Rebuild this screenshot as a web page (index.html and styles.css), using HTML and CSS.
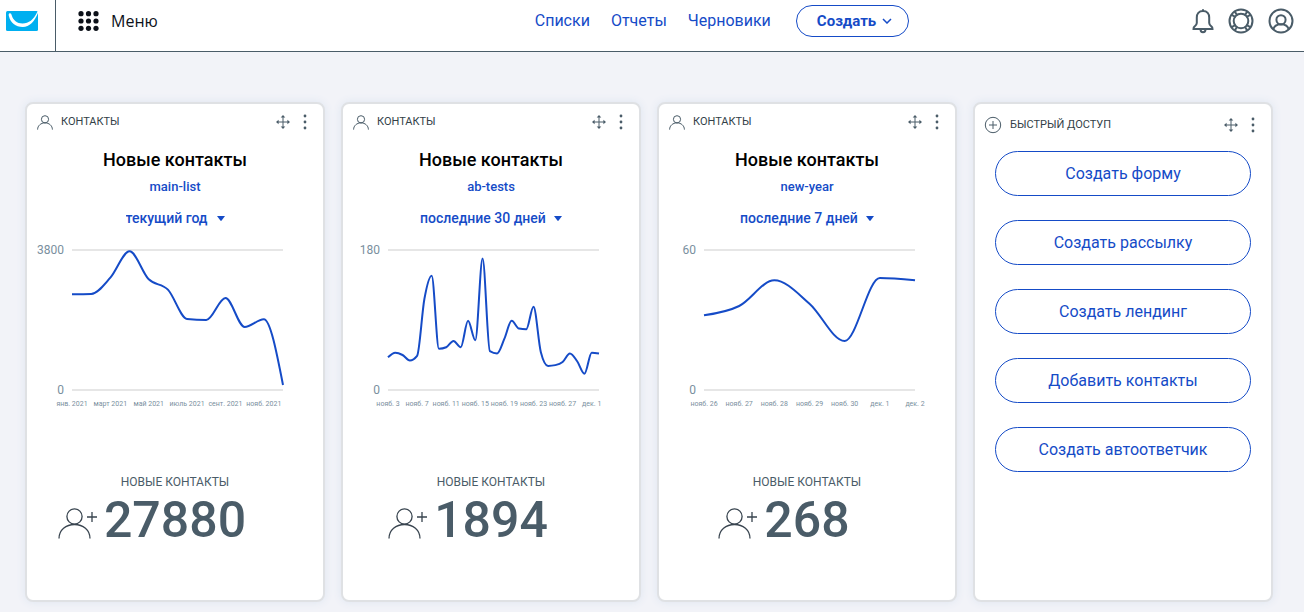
FILE: index.html
```html
<!DOCTYPE html>
<html lang="ru">
<head>
<meta charset="utf-8">
<meta name="viewport" content="width=device-width, initial-scale=1">
<title>Панель управления</title>
<link rel="stylesheet" href="styles.css">
</head>
<body>
<svg class="sprite" aria-hidden="true">
  <symbol id="person" viewBox="0 0 16 15"><circle cx="8" cy="4.3" r="3.6"/><path d="M.6 14.6C.6 10.6 3.9 7.9 8 7.9s7.4 2.7 7.4 6.7"/></symbol>
  <symbol id="move" viewBox="0 0 14 14"><path d="M7 1v12M1 7h12"/><path class="solid" d="M7 0l2.3 2.6H4.7zM7 14l2.3-2.6H4.7zM0 7l2.6-2.3v4.6zM14 7l-2.6-2.3v4.6z"/></symbol>
  <symbol id="dots" viewBox="0 0 4 16"><g class="solid"><circle cx="2" cy="2" r="1.4"/><circle cx="2" cy="8" r="1.4"/><circle cx="2" cy="14" r="1.4"/></g></symbol>
  <symbol id="caret" viewBox="0 0 8 5"><path class="solid" d="M0 0h8L4.6 4.6q-.6.6-1.2 0z"/></symbol>
  <symbol id="person-add" viewBox="0 0 40 32"><circle cx="16.5" cy="9.5" r="7.6"/><path d="M1 31.500c0-8.500 7-14 15.500-14S32 23 32 31.500M29 10h10M34 5v10"/></symbol>
</svg>

<header class="topbar">
  <a class="logo" href="#" aria-label="Главная">
    <svg width="32" height="20" viewBox="0 0 32 20"><rect width="32" height="20" rx="1.500" fill="#00aff0"/><path d="M3.200 2.500c1.500-.6 2 .2 2.600 2C7.200 9.200 11 12.500 16.500 12.500 23 12.500 27.500 8.500 31 1.500l1-1.500v2C28.500 10.500 23.500 16 16.800 16 9.500 16 4.500 11.500 3 5.500c-.4-1.500-.5-2.500.2-3z" fill="#fff"/></svg>
  </a>
  <button class="menu" type="button">
    <svg width="21" height="20" viewBox="0 0 21 20" fill="currentColor"><circle cx="3" cy="2.700" r="2.600"/><circle cx="10.500" cy="2.700" r="2.600"/><circle cx="18" cy="2.700" r="2.600"/><circle cx="3" cy="10" r="2.600"/><circle cx="10.500" cy="10" r="2.600"/><circle cx="18" cy="10" r="2.600"/><circle cx="3" cy="17.300" r="2.600"/><circle cx="10.500" cy="17.300" r="2.600"/><circle cx="18" cy="17.300" r="2.600"/></svg>
    Меню
  </button>
  <nav class="nav">
    <a href="#">Списки</a>
    <a href="#">Отчеты</a>
    <a href="#">Черновики</a>
    <button class="create" type="button">Создать
      <svg width="10" height="6" viewBox="0 0 10 6"><path d="M1 1l4 4 4-4" fill="none" stroke="currentColor" stroke-width="1.500"/></svg>
    </button>
  </nav>
  <div class="tools">
    <button type="button" aria-label="Уведомления"><svg width="22" height="26" viewBox="0 0 22 26"><path d="M11 1.200v2M11 3C6.800 3 4.800 6 4.800 9.500v5.500c0 1.800-.8 2.400-2.300 3.600-.8.700-1 1.200-1 2.300h19c0-1.100-.2-1.600-1-2.300-1.500-1.200-2.300-1.800-2.300-3.600V9.500C17.200 6 15.200 3 11 3zM8.500 21c0 2.200 1 3.300 2.500 3.300s2.500-1.100 2.500-3.300"/></svg></button>
    <button type="button" aria-label="Помощь"><svg width="26" height="26" viewBox="0 0 26 26"><circle cx="13" cy="13" r="11.500"/><circle cx="13" cy="13" r="7.300"/><path d="M3.600 6.800l3.800 2.100M6.800 3.600l2.300 3.600M19.200 3.600l-2.300 3.600M22.400 6.800l-3.800 2.100M3.600 19.200l3.800-2.100M6.800 22.400l2.300-3.600M19.200 22.400l-2.300-3.600M22.400 19.200l-3.800-2.100"/></svg></button>
    <button type="button" aria-label="Профиль"><svg width="26" height="26" viewBox="0 0 26 26"><circle cx="13" cy="13" r="11.500"/><circle cx="13" cy="11.800" r="4.600"/><path d="M5.300 21.500c.7-3.400 3.700-5.300 7.700-5.300s7 1.900 7.700 5.300"/></svg></button>
  </div>
</header>

<main class="board">
  <section class="card">
    <div class="card-head">
      <svg class="icon" width="16" height="15"><use href="#person"/></svg>
      <span class="card-label">КОНТАКТЫ</span>
      <button type="button" aria-label="Переместить"><svg class="icon" width="14" height="14"><use href="#move"/></svg></button>
      <button type="button" aria-label="Действия"><svg class="icon" width="4" height="16"><use href="#dots"/></svg></button>
    </div>
    <h2 class="title">Новые контакты</h2>
    <a class="list-link" href="#">main-list</a>
    <label class="period"><select aria-label="Период"><option>текущий год</option></select><svg width="8" height="5"><use href="#caret"/></svg></label>
    <svg class="chart" viewBox="0 0 296 180" data-max="3800" data-values="2597,2606,3049,3764,3004,2723,1927,1900,2497,1710,1918,136" data-step="2" data-labels="янв. 2021|март 2021|май 2021|июль 2021|сент. 2021|нояб. 2021"></svg>
    <div class="stat-label">НОВЫЕ КОНТАКТЫ</div>
    <div class="stat"><svg class="icon" width="40" height="32"><use href="#person-add"/></svg>27880</div>
  </section>

  <section class="card">
    <div class="card-head">
      <svg class="icon" width="16" height="15"><use href="#person"/></svg>
      <span class="card-label">КОНТАКТЫ</span>
      <button type="button" aria-label="Переместить"><svg class="icon" width="14" height="14"><use href="#move"/></svg></button>
      <button type="button" aria-label="Действия"><svg class="icon" width="4" height="16"><use href="#dots"/></svg></button>
    </div>
    <h2 class="title">Новые контакты</h2>
    <a class="list-link" href="#">ab-tests</a>
    <label class="period"><select aria-label="Период"><option>последние 30 дней</option></select><svg width="8" height="5"><use href="#caret"/></svg></label>
    <svg class="chart" viewBox="0 0 296 180" data-max="180" data-values="42,48,45,38,44,117,147,53,55,63,55,89,64,169,50,47,66,89,79,78,107,49,31,32,36,47,37,21,48,47" data-step="4" data-labels="нояб. 3|нояб. 7|нояб. 11|нояб. 15|нояб. 19|нояб. 23|нояб. 27|дек. 1"></svg>
    <div class="stat-label">НОВЫЕ КОНТАКТЫ</div>
    <div class="stat"><svg class="icon" width="40" height="32"><use href="#person-add"/></svg>1894</div>
  </section>

  <section class="card">
    <div class="card-head">
      <svg class="icon" width="16" height="15"><use href="#person"/></svg>
      <span class="card-label">КОНТАКТЫ</span>
      <button type="button" aria-label="Переместить"><svg class="icon" width="14" height="14"><use href="#move"/></svg></button>
      <button type="button" aria-label="Действия"><svg class="icon" width="4" height="16"><use href="#dots"/></svg></button>
    </div>
    <h2 class="title">Новые контакты</h2>
    <a class="list-link" href="#">new-year</a>
    <label class="period"><select aria-label="Период"><option>последние 7 дней</option></select><svg width="8" height="5"><use href="#caret"/></svg></label>
    <svg class="chart" viewBox="0 0 296 180" data-max="60" data-values="32,36,47,37,21,48,47" data-step="1" data-labels="нояб. 26|нояб. 27|нояб. 28|нояб. 29|нояб. 30|дек. 1|дек. 2"></svg>
    <div class="stat-label">НОВЫЕ КОНТАКТЫ</div>
    <div class="stat"><svg class="icon" width="40" height="32"><use href="#person-add"/></svg>268</div>
  </section>

  <section class="card">
    <div class="card-head card-head-tall">
      <svg class="icon" width="18" height="18" viewBox="0 0 18 18"><circle cx="9" cy="9" r="7.700"/><path d="M9 5v8M5 9h8"/></svg>
      <span class="card-label">БЫСТРЫЙ ДОСТУП</span>
      <button type="button" aria-label="Переместить"><svg class="icon" width="14" height="14"><use href="#move"/></svg></button>
      <button type="button" aria-label="Действия"><svg class="icon" width="4" height="16"><use href="#dots"/></svg></button>
    </div>
    <div class="actions">
      <button type="button">Создать форму</button>
      <button type="button">Создать рассылку</button>
      <button type="button">Создать лендинг</button>
      <button type="button">Добавить контакты</button>
      <button type="button">Создать автоответчик</button>
    </div>
  </section>
</main>
<script src="charts.js"></script>
</body>
</html>
```
FILE: styles.css
```css
* { box-sizing: border-box; }

body {
  margin: 0;
  background: #f2f3f8;
  color: #000;
  font: 16px/20px Roboto, "Liberation Sans", sans-serif;
}

button, select {
  margin: 0;
  padding: 0;
  border: 0;
  background: none;
  color: inherit;
  font: inherit;
  cursor: pointer;
}

a { color: #154bc7; text-decoration: none; }
svg { display: block; flex: none; }

.sprite { position: absolute; width: 0; height: 0; }
.solid { fill: currentColor; stroke: none; }

.icon {
  color: #4a5c68;
  fill: none;
  stroke: currentColor;
  stroke-width: 1;
}

.topbar {
  display: grid;
  grid-template-columns: auto auto 4fr auto 3fr auto;
  align-items: center;
  height: 52px;
  padding-bottom: 9px;
  border-bottom: 1px solid #4a5c68;
  background: #fff;
}

.logo {
  align-self: start;
  height: 51px;
  margin-bottom: -9px;
  padding: 11px 17px 0 6px;
  border-right: 1px solid #4a5c68;
}

.menu {
  display: flex;
  align-items: center;
  gap: 12px;
  margin-left: 22px;
  font-family: "Open Sans", "Noto Sans", sans-serif;
  font-weight: 500;
  color: #0c1119;
}

.nav {
  grid-column: 4;
  display: flex;
  align-items: center;
  gap: 21px;
}

.create {
  display: flex;
  align-items: center;
  justify-content: center;
  gap: 6px;
  height: 32px;
  margin-left: 4px;
  padding: 0 16px 0 20px;
  border: 1px solid #154bc7;
  border-radius: 16px;
  color: #154bc7;
  font-size: 15px;
  font-weight: 700;
}

.tools {
  grid-column: 6;
  display: flex;
  gap: 14px;
  padding-right: 10px;
}

.tools svg {
  fill: none;
  stroke: #4a5c68;
  stroke-width: 2;
}

.board {
  display: grid;
  grid-template-columns: repeat(4, 1fr);
  gap: 16px;
  padding: 50px 31px 11px 25px;
}

.card {
  display: flex;
  flex-direction: column;
  align-items: center;
  padding-bottom: 54px;
  border: 2px solid #dfe1e4;
  border-radius: 8px;
  background: #fff;
  box-shadow: 0 0 8px #dde5f0;
}

.card-head {
  display: flex;
  align-items: center;
  align-self: stretch;
  gap: 8px;
  height: 36px;
  padding: 0 16px 0 10px;
}

.card-head-tall { height: 42px; padding-left: 9px; }
.card-label { flex: 1; font-size: 11px; color: #333f48; }
.card-head button:last-child { margin-left: 5px; }

.title {
  margin: 8px 0 5px;
  font-size: 18px;
  line-height: 24px;
  font-weight: 500;
}

.list-link { font-size: 13px; font-weight: 500; }

.period {
  display: flex;
  align-items: center;
  gap: 8px;
  height: 20px;
  margin: 11px 0 7px;
  color: #154bc7;
  font-size: 14px;
  font-weight: 500;
}

.period select { appearance: none; }

.chart { width: 100%; overflow: visible; }
.chart .grid { stroke: #e6e6e6; stroke-width: 2; }
.chart .series { fill: none; stroke: #154bc7; stroke-width: 2; }
.chart text { fill: #7a8f9e; font-size: 12px; text-anchor: end; }
.chart .tick { font-size: 7px; text-anchor: middle; }

.stat-label {
  margin-top: 57px;
  font-size: 12px;
  color: #4a5c68;
}

.stat {
  display: flex;
  align-items: center;
  gap: 6px;
  margin: 2px 0 0 -46px;
  color: #4a5c68;
  font-size: 50px;
  line-height: 52px;
  font-weight: 500;
}

.stat .icon { margin-top: 6px; color: #38444f; stroke-width: 1.3; }

.actions {
  display: grid;
  gap: 24px;
  align-self: stretch;
  padding: 5px 20px;
}

.actions button {
  height: 45px;
  border: 1px solid #154bc7;
  border-radius: 23px;
  color: #154bc7;
}
```
FILE: charts.js
```js
const SVG_NS = 'http://www.w3.org/2000/svg';
const LEFT = 45, RIGHT = 256, TOP = 15, BOTTOM = 155;

function add(parent, name, attrs, text) {
  const node = document.createElementNS(SVG_NS, name);
  for (const key in attrs) node.setAttribute(key, attrs[key]);
  if (text !== undefined) node.textContent = text;
  parent.appendChild(node);
}

// Monotone cubic curve over evenly spaced points.
function curve(ys, step) {
  const n = ys.length;
  const d = ys.slice(1).map((y, i) => (y - ys[i]) / step);
  const m = ys.map((y, i) => {
    if (i === 0 || i === n - 1) return 0;
    const a = d[i - 1], b = d[i];
    if (a * b <= 0) return 0;
    return Math.sign(a) * Math.min(Math.abs(a), Math.abs(b), Math.abs(a + b) / 4) * 2;
  });
  m[0] = (3 * d[0] - m[1]) / 2;
  m[n - 1] = (3 * d[n - 2] - m[n - 2]) / 2;
  let path = `M${LEFT},${ys[0]}`;
  for (let i = 1; i < n; i++) {
    const x0 = LEFT + step * (i - 1), x1 = x0 + step, h = step / 3;
    path += `C${x0 + h},${ys[i - 1] + m[i - 1] * h} ${x1 - h},${ys[i] - m[i] * h} ${x1},${ys[i]}`;
  }
  return path;
}

document.querySelectorAll('.chart').forEach((svg) => {
  const max = Number(svg.dataset.max);
  const values = svg.dataset.values.split(',').map(Number);
  const step = (RIGHT - LEFT) / (values.length - 1);
  [[TOP, max], [BOTTOM, 0]].forEach(([y, label]) => {
    add(svg, 'line', { class: 'grid', x1: LEFT, x2: RIGHT, y1: y, y2: y });
    add(svg, 'text', { x: LEFT - 8, y: y + 4 }, label);
  });
  const ys = values.map((v) => BOTTOM - (v / max) * (BOTTOM - TOP));
  add(svg, 'path', { class: 'series', d: curve(ys, step) });
  svg.dataset.labels.split('|').forEach((label, i) => {
    add(svg, 'text', { class: 'tick', x: LEFT + i * step * svg.dataset.step, y: 171 }, label);
  });
});
```
